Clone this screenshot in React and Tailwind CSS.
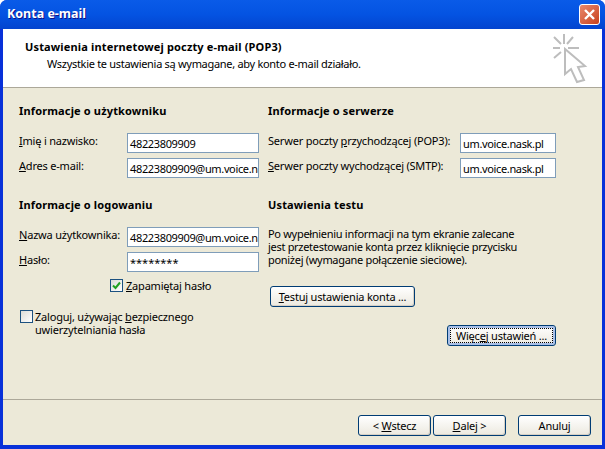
const F = { fontFamily: '"Noto Sans", sans-serif' };

function Field({ value, w = "w-[132px]" }) {
  return (
    <div className={`${w} h-[20px] shrink-0 border border-[#7f9db9] bg-white pl-[2px] overflow-hidden whitespace-nowrap text-[11px] leading-[19px] text-black tracking-[-0.35px]`}>
      {value}
    </div>
  );
}

function Row({ label, value, labelW, w, mb }) {
  return (
    <div className={`flex items-start ${mb}`}>
      <div className={`${labelW} shrink-0 leading-[15px] whitespace-nowrap`}>{label}</div>
      <Field value={value} w={w} />
    </div>
  );
}

function Heading({ children, cls }) {
  return <div className={`font-bold text-[11px] leading-[14px] tracking-[0.15px] text-black ${cls}`}>{children}</div>;
}

function Btn({ children, w, focus, cls = "" }) {
  return (
    <div className={`${w} h-[21px] shrink-0 rounded-[3px] border border-[#003c74] bg-gradient-to-b from-white to-[#ece9df] flex items-center justify-center text-[11px] leading-none text-black ${focus ? "shadow-[inset_0_0_0_2px_#a9c0e8] outline-1 -outline-offset-4 outline-dotted outline-black" : "shadow-[inset_-1px_-1px_0_#d6d0c5]"} ${cls}`}>
      <span>{children}</span>
    </div>
  );
}

function Check({ checked }) {
  return (
    <div className="w-[13px] h-[13px] shrink-0 border border-[#1c5180] bg-gradient-to-br from-[#dcdcd7] to-white flex items-center justify-center">
      {checked && (
        <svg width="9" height="9" viewBox="0 0 9 9">
          <path d="M1 4.5 L3.5 7 L8 1.5" fill="none" stroke="#21a121" strokeWidth="2" />
        </svg>
      )}
    </div>
  );
}

function Cursor() {
  return (
    <svg width="36" height="50" viewBox="0 0 36 50" className="shrink-0">
      <g fill="none" stroke="#bdbdbd" strokeWidth="2">
        <path d="M11 0 V10 M1 3 L8 10 M20 3 L14 10 M0 14 H7 M15 14 H26 M1 24 L8 18" />
        <path d="M12 15 V40 L18 35 L24 48 L31 46 L25 33 L32 32 Z" />
      </g>
    </svg>
  );
}

export default function App() {
  return (
    <div style={F} className="w-[605px] h-[449px] flex flex-col overflow-hidden bg-[#0831d9] rounded-t-[7px] text-[11px] text-black tracking-[-0.2px]">
      <div className="h-[29px] shrink-0 flex items-center justify-between pl-[7px] pr-[5px] bg-gradient-to-b from-[#0a5be8] via-[#0453e2] to-[#0344cf]">
        <div className="font-bold text-[12.5px] tracking-[0px] text-white [text-shadow:1px_1px_0_#0f1089]">Konta e-mail</div>
        <div className="w-[21px] h-[21px] rounded-[3px] border border-white bg-gradient-to-br from-[#e8876a] to-[#c8401a] flex items-center justify-center">
          <svg width="13" height="13" viewBox="0 0 13 13">
            <path d="M2 2 L11 11 M11 2 L2 11" stroke="#fff" strokeWidth="2.4" />
          </svg>
        </div>
      </div>

      <div className="flex-1 mx-[3px] mb-[4px] flex flex-col bg-[#ece9d8]">
        <div className="h-[58px] shrink-0 bg-white border-b border-[#aca899] flex justify-between pl-[22px] pr-[13px] box-content">
          <div className="pt-[11px]">
            <div className="font-bold text-[11px] leading-[14px] tracking-[0.15px]">Ustawienia internetowej poczty e-mail (POP3)</div>
            <div className="pl-[22px] leading-[14px] mt-[3px] tracking-[-0.3px]">Wszystkie te ustawienia są wymagane, aby konto e-mail działało.</div>
          </div>
          <div className="pt-[5px]"><Cursor /></div>
        </div>

        <div className="flex-1 flex pl-[16px] pt-[16px] border-b border-[#aca899]">
          <div className="w-[249px] shrink-0 flex flex-col">
            <Heading cls="mb-[15px]">Informacje o użytkowniku</Heading>
            <Row labelW="w-[108px]" mb="mb-[5px]" value="48223809909" label={<><u>I</u>mię i nazwisko:</>} />
            <Row labelW="w-[108px]" mb="mb-[20px]" value="48223809909@um.voice.nask.pl" label={<><u>A</u>dres e-mail:</>} />
            <Heading cls="mb-[15px]">Informacje o logowaniu</Heading>
            <Row labelW="w-[108px]" mb="mb-[5px]" value="48223809909@um.voice.nask.pl" label={<><u>N</u>azwa użytkownika:</>} />
            <Row labelW="w-[108px]" mb="mb-[7px]" value={<span className="tracking-[0px]">********</span>} label={<><u>H</u>asło:</>} />
            <div className="flex items-center gap-[3px] pl-[91px] mb-[18px] leading-[13px]">
              <Check checked /><span><u>Z</u>apamiętaj hasło</span>
            </div>
            <div className="flex items-start gap-[2px] pl-[1px] leading-[13px]">
              <Check /><span>Zaloguj, używając <u>b</u>ezpiecznego<br />uwierzytelniania hasła</span>
            </div>
          </div>
          <div className="w-[288px] shrink-0 flex flex-col">
            <Heading cls="mb-[15px]">Informacje o serwerze</Heading>
            <Row labelW="w-[192px]" w="w-[96px]" mb="mb-[5px]" value="um.voice.nask.pl" label={<>Serwer poczty <u>p</u>rzychodzącej (POP3):</>} />
            <Row labelW="w-[192px]" w="w-[96px]" mb="mb-[20px]" value="um.voice.nask.pl" label={<><u>S</u>erwer poczty wychodzącej (SMTP):</>} />
            <Heading cls="mb-[15px]">Ustawienia testu</Heading>
            <div className="leading-[13px] mb-[20px] whitespace-nowrap tracking-[-0.3px]">
              Po wypełnieniu informacji na tym ekranie zalecane<br />
              jest przetestowanie konta przez kliknięcie przycisku<br />
              poniżej (wymagane połączenie sieciowe).
            </div>
            <div className="pl-[2px] mb-[18px]">
              <Btn w="w-[145px]"><u>T</u>estuj ustawienia konta ...</Btn>
            </div>
            <div className="pl-[179px]">
              <Btn w="w-[109px]" focus>Więc<u>e</u>j ustawień ...</Btn>
            </div>
          </div>
        </div>

        <div className="h-[45px] shrink-0 flex justify-end items-start pt-[15px] pr-[11px]">
          <Btn w="w-[73px]">&lt; <u>W</u>stecz</Btn>
          <Btn w="w-[73px]" cls="ml-[2px]"><u>D</u>alej &gt;</Btn>
          <Btn w="w-[73px]" cls="ml-[12px]">Anuluj</Btn>
        </div>
      </div>
    </div>
  );
}
